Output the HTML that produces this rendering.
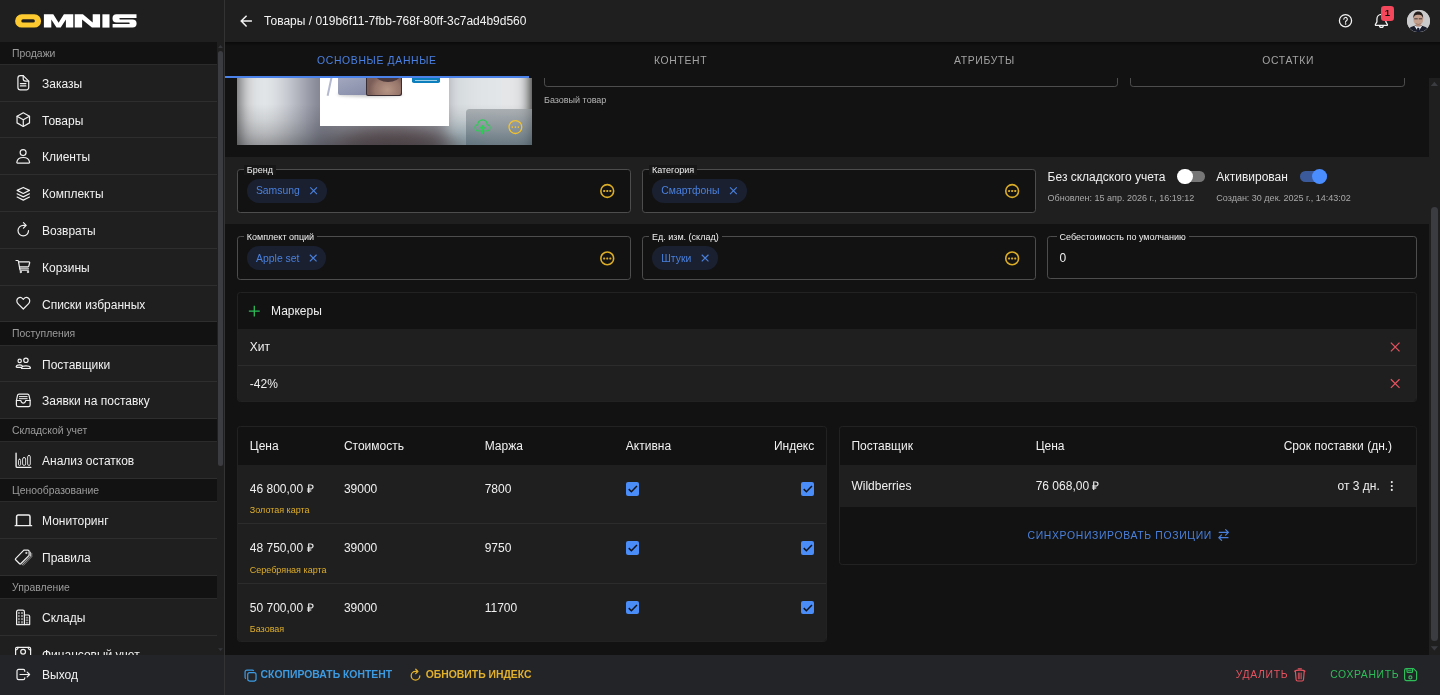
<!DOCTYPE html>
<html lang="ru">
<head>
<meta charset="utf-8">
<title>Omnis</title>
<style>
*{box-sizing:border-box;margin:0;padding:0}
html,body{width:1440px;height:695px;overflow:hidden;background:#121212;}
body{font-family:"Liberation Sans",sans-serif;font-size:12px;color:#ededed;position:relative;-webkit-font-smoothing:antialiased}
#app{position:absolute;left:0;top:0;width:1440px;height:695px;overflow:hidden;will-change:transform;background:#121212}
.abs{position:absolute}
svg{display:block}
.ic{position:absolute;width:20px;height:20px}
.ic svg{width:20px;height:20px;fill:none;stroke:#f0f0f0;stroke-width:1.5;stroke-linecap:round;stroke-linejoin:round}

/* ---------- sidebar ---------- */
#side{left:0;top:0;width:224px;height:695px;background:#1f1f1f;overflow:hidden}
#sideline{left:224px;top:0;width:1px;height:695px;background:#333333}
#logo{left:0;top:0;width:224px;height:41.6px}
#slist{left:0;top:41.6px;width:217px;height:614px;overflow:hidden}
.sh{height:23.2px;background:#121212;border-bottom:1px solid #2b2b2b;color:#9c9c9c;font-size:10.4px;line-height:23.6px;padding-left:12px}
.si{height:36.8px;border-bottom:1px solid #2e2e2e;position:relative;line-height:38.4px;padding-left:42px;font-size:12px;color:#f1f1f1;white-space:nowrap}
.si .ic{left:13px;top:8.5px}
#sscroll{left:217px;top:41.6px;width:7px;height:613px;background:#1f1f1f}
#sthumb{left:218px;top:50.700px;width:5px;height:415.700px;border-radius:2.500px;background:#3b3c41}
#sfoot{left:0;top:654.6px;width:224px;height:41px;background:#232428}
#sfoot .t{left:42px;top:0;line-height:41.400px;font-size:12px;color:#f1f1f1}
#sfoot .ic{left:13px;top:9.400px}

/* ---------- header ---------- */
#head{left:225px;top:0;width:1215px;height:41.8px;background:#1f1f1f}
#title{left:264.1px;top:0;line-height:42.6px;font-size:12px;color:#f3f3f3;white-space:nowrap}
#tabs{left:225px;top:41.8px;width:1215px;height:36.2px;background:#121212}
#tabshadow{left:225px;top:41.8px;width:1215px;height:4px;background:linear-gradient(#0a0a0a,rgba(18,18,18,0))}
.tab{position:absolute;top:41.8px;width:303.75px;height:34.4px;line-height:37px;text-align:center;font-size:10.4px;letter-spacing:.66px;color:#a3a3a3;white-space:nowrap}
.tab.on{color:#4a80e2}
#tabline{left:225px;top:76px;width:303.6px;height:2px;background:#4a82ea}

/* ---------- content ---------- */
.t12{position:absolute;font-size:12px;line-height:14px;white-space:nowrap;color:#f0f0f0}
.t9{position:absolute;font-size:9px;line-height:10px;white-space:nowrap}
.t10{position:absolute;font-size:10.4px;line-height:11px;white-space:nowrap}
#band{left:225px;top:157px;width:1204px;height:67.300px;background:#1f1f1f}
.fld{position:absolute;border:1px solid #4d4d4d;border-radius:3.200px;background:#121212}
.lbl{position:absolute;font-size:9px;line-height:10px;color:#f0f0f0;white-space:nowrap;padding:0 3px}
.chip{position:absolute;height:24px;border-radius:12px;background:#1a2030}
.chip .ct{position:absolute;left:9.300px;top:6.500px;font-size:10.400px;line-height:11px;color:#4a80dc;white-space:nowrap}
.dots{position:absolute;width:19.200px;height:19.200px}
.panel{position:absolute;border:1px solid #222222;border-radius:3.200px;overflow:hidden;background:#121212}
.row{position:absolute;left:0;width:100%;background:#1f1f1f}
.hl{position:absolute;left:0;width:100%;height:1px;background:#2c2c2c}
.cb{position:absolute;width:13.700px;height:13.700px;border-radius:2px;background:#4a8cf8}
.cb svg{width:13.700px;height:13.700px}
#vscroll{left:1429px;top:78px;width:11px;height:577px;background:#1f1f1f}
#vthumb{left:1430.800px;top:207.300px;width:7.200px;height:433.700px;border-radius:3.600px;background:#3b3c41}
#foot{left:225px;top:654.600px;width:1215px;height:41px;background:#232428}
.fb{position:absolute;font-size:10.400px;line-height:11px;white-space:nowrap}
</style>
</head>
<body>
<div id="app">

<!-- ================= SIDEBAR ================= -->
<div id="side" class="abs">
  <div id="logo" class="abs">
    <svg width="224" height="42" viewBox="0 0 224 42">
      <path fill="#fdcb2f" fill-rule="evenodd" d="M21.8 14.2h12.6a6.7 6.7 0 0 1 0 13.4H21.8a6.7 6.7 0 0 1 0-13.4zM23 19.2a1.7 1.7 0 0 0 0 3.4h10.2a1.7 1.7 0 0 0 0-3.4z"/>
      <g fill="#ffffff">
        <path d="M43.9 14.3h9.4l5.3 8.4 5.3-8.4h9.4v13.3h-7.4v-8.2l-5.2 8.2h-4.2l-5.2-8.2v8.2h-7.4z"/>
        <path d="M74.7 14.3h8.2l9.8 8.1v-8.1h7.4v13.3h-8.2l-9.8-8.1v8.1h-7.4z"/>
        <path d="M102.4 14.3h7.1v13.3h-7.1z"/>
        <path d="M116.6 14.3h19.9v3.6h-16.3q-.9 0-.9.75t.9.75h12.3q4.1 0 4.1 4.1t-4.1 4.1h-19.9v-3.6h16.3q.9 0 .9-.75t-.9-.75h-12.3q-4.1 0-4.1-4.1t4.1-4.1z"/>
      </g>
    </svg>
  </div>

  <div id="slist" class="abs">
    <div class="sh">Продажи</div>
    <div class="si"><span class="ic"><svg viewBox="-0.75 0 25 25"><path d="M8.400 3.250h3.600l6.900 6.900v7.850a3 3 0 0 1-3 3h-7.500a3 3 0 0 1-3-3V6.250a3 3 0 0 1 3-3z"/><path d="M12 3.250v4a2.900 2.900 0 0 0 2.900 2.900h4"/><path d="M8.500 13.250h6.900M8.500 16.100h6.900"/></svg></span>Заказы</div>
    <div class="si"><span class="ic"><svg viewBox="-0.75 0 25 25"><path d="M12.100 3.500l7.800 4.400v8.200l-7.800 4.400-7.800-4.400V7.900z"/><path d="M4.300 7.900l7.800 4.300 7.800-4.300M12.100 12.200v8.300"/></svg></span>Товары</div>
    <div class="si"><span class="ic"><svg viewBox="-0.75 0 25 25"><circle cx="11.900" cy="7" r="3.700"/><path d="M4.900 20.250a.9.900 0 0 1-.9-1c.5-3.750 3.800-6.150 8-6.150s7.500 2.400 8 6.150a.9.900 0 0 1-.9 1z"/></svg></span>Клиенты</div>
    <div class="si"><span class="ic"><svg viewBox="-0.75 0 25 25"><path d="M12.100 4.300l7.700 3.700-7.700 3.900-7.700-3.900z"/><path d="M4.400 12.200l7.700 3.900 7.700-3.900M4.400 16.300l7.700 3.900 7.700-3.900"/></svg></span>Комплекты</div>
    <div class="si"><span class="ic"><svg viewBox="-0.75 0 25 25"><path d="M18.700 13.250a6.600 6.600 0 1 1-6.600-6.600h3"/><path d="M12.300 3.300l3.400 3.400-3.400 3.400"/></svg></span>Возвраты</div>
    <div class="si"><span class="ic"><svg viewBox="-0.75 0 25 25"><path d="M3 4.400h2a1 1 0 0 1 1 .8l2 11.200h10.600"/><path d="M6.300 6.100h12.900a.9.900 0 0 1 .9 1.100l-1.100 4.300a1 1 0 0 1-1 .8H7.400"/><path d="M7.700 14.300h10.800" stroke-opacity=".7"/><circle cx="8.900" cy="18.700" r=".9" fill="#f0f0f0" stroke-width="1"/><circle cx="17.900" cy="18.700" r=".9" fill="#f0f0f0" stroke-width="1"/></svg></span>Корзины</div>
    <div class="si"><span class="ic"><svg viewBox="-0.75 0 25 25"><path d="M12.100 18.800L5.400 12C3.500 10 3.600 7 5.500 5.400c1.900-1.600 4.500-1.200 6.100.6l.5.600.5-.6c1.600-1.800 4.200-2.200 6.100-.6 1.900 1.600 2 4.600.1 6.600z"/></svg></span>Списки избранных</div>
    <div class="sh">Поступления</div>
    <div class="si"><span class="ic"><svg viewBox="-0.75 0 25 25"><circle cx="7.600" cy="8.600" r="2.100"/><circle cx="15.400" cy="7.900" r="2.750"/><path d="M10.600 18.100a.85.850 0 0 1-.85-1c.55-1.600 2.750-2.350 5.650-2.350s5.100.75 5.650 2.350a.85.850 0 0 1-.85 1z"/><path d="M9.300 16.750H4.100a.85.850 0 0 1-.85-1c.45-1.450 2.150-2.150 4.350-2.150 1.200 0 2.200.2 3 .7"/></svg></span>Поставщики</div>
    <div class="si"><span class="ic"><svg viewBox="-0.75 0 25 25"><path d="M6.900 4h10.400a2 2 0 0 1 2 1.600l1.400 6.300v5.700a2 2 0 0 1-2 2H5.500a2 2 0 0 1-2-2v-5.700l1.400-6.300a2 2 0 0 1 2-1.600z"/><path d="M3.500 11.900h5.600c.3 2 1.400 3.300 3 3.300s2.700-1.300 3-3.300h5.650"/><path d="M7.200 7h9.800M7.200 9.600h9.800" stroke-width="1.250"/></svg></span>Заявки на поставку</div>
    <div class="sh">Складской учет</div>
    <div class="si"><span class="ic"><svg viewBox="-0.75 0 25 25"><path d="M3.100 2.800v16.200a1.500 1.500 0 0 0 1.500 1.500h16.900" stroke-width="1.700"/><rect x="6.100" y="10.300" width="2.650" height="7.700" rx="1.300" stroke-width="1.100"/><rect x="11.250" y="8.200" width="3.800" height="9.800" rx="1.800" stroke-width="1.100"/><rect x="17.550" y="5.600" width="3.350" height="12.400" rx="1.600" stroke-width="1.100"/></svg></span>Анализ остатков</div>
    <div class="sh">Ценообразование</div>
    <div class="si"><span class="ic"><svg viewBox="-0.75 0 25 25"><path d="M3.750 17.700V7.100a2 2 0 0 1 2-2h12.750a2 2 0 0 1 2 2v10.600" stroke-width="1.900"/><path d="M1.900 18.400h20.700" stroke-width="1.500"/></svg></span>Мониторинг</div>
    <div class="si"><span class="ic"><svg viewBox="-0.75 0 25 25"><path d="M12.800 2.600h5a1.600 1.600 0 0 1 1.600 1.600v5L8.900 19.700a1 1 0 0 1-1.400 0l-5-5a1 1 0 0 1 0-1.400z"/><circle cx="15.850" cy="6.150" r=".9" fill="#f0f0f0" stroke-width=".6"/><path d="M21.100 5.200v5L10.700 20.800" stroke-width="1.150" stroke-opacity=".85"/><path d="M22.700 6.600v4.300L12.300 21.600" stroke-width="1.050" stroke-opacity=".6"/></svg></span>Правила</div>
    <div class="sh">Управление</div>
    <div class="si"><span class="ic"><svg viewBox="-0.75 0 25 25"><path d="M3.750 20.750V4.750a2 2 0 0 1 2-2h5.750a2 2 0 0 1 2 2v16z"/><path d="M13.500 8.750h4.600a2 2 0 0 1 2 2v10h-6.600"/><g stroke="none" fill="#8c8c8c"><rect x="5.500" y="5" width="2.300" height="2.600"/><rect x="9.200" y="5" width="2.600" height="2.600"/><rect x="5.500" y="8.800" width="2.300" height="2.600"/><rect x="9.200" y="8.800" width="2.600" height="2.600"/><rect x="5.500" y="12.600" width="2.300" height="2.600"/><rect x="9.200" y="12.600" width="2.600" height="2.600"/><rect x="5.500" y="16.400" width="2.300" height="3"/><rect x="9.200" y="16.400" width="2.600" height="3"/><rect x="15.200" y="11" width="3.200" height="2.200"/><rect x="15.200" y="14.200" width="3.200" height="2.200"/><rect x="15.200" y="17.400" width="3.200" height="2.200"/></g></svg></span>Склады</div>
    <div class="si"><span class="ic"><svg viewBox="-0.75 0 25 25"><rect x="2.500" y="4.250" width="18.750" height="11" rx="1.500"/><circle cx="11.900" cy="9.600" r="3"/><path d="M2.500 7.400a3 3 0 0 0 3-3.100M21.250 7.400a3 3 0 0 1-3-3.100"/></svg></span>Финансовый учет</div>
  </div>
  <div id="sscroll" class="abs"></div>
  <div id="sthumb" class="abs"></div>
  <svg class="abs" style="left:218px;top:45px;width:5px;height:3px" width="5" height="3" viewBox="-0.1 -0.1 5 3"><path d="M0 2.900L2.400 0 4.800 2.900z" fill="#36373b"/></svg>
  <svg class="abs" style="left:218px;top:648px;width:5px;height:4px" width="5" height="4" viewBox="-0.1 -0.2 5 4"><path d="M0 0L2.400 2.900 4.800 0z" fill="#36373b"/></svg>
  <div id="sfoot" class="abs">
    <span class="ic"><svg viewBox="-0.75 -1 25 25"><path d="M14 8.100v-.400a2 2 0 0 0-2-2H6.250a2 2 0 0 0-2 2v8.900a2 2 0 0 0 2 2H12a2 2 0 0 0 2-2v-.400"/><path d="M8 12.150h11.800M17 9.200l3 2.950-3 2.950"/></svg></span>
    <span class="t abs">Выход</span>
  </div>
</div>
<div id="sideline" class="abs"></div>

<!-- ================= CONTENT ================= -->
<!-- product image -->
<div class="abs" id="pimg" style="left:236.800px;top:78px;width:295.700px;height:66.600px;overflow:hidden;background:#8c8c90">
  <div class="abs" style="left:-20px;top:-30px;width:336px;height:127px;filter:blur(5px);background:
    radial-gradient(ellipse 72px 24px at 176px 97px,#66595c 0%,#6d6165 50%,rgba(109,97,101,0) 100%),
    radial-gradient(ellipse 30px 30px at 246px 96px,#b4d0da 0%,rgba(180,208,218,0) 100%),
    linear-gradient(90deg,#6e6e70 0px,#6e6e70 19px,#b2b3b5 25px,#d9dcde 33px,#e5e8ea 48px,#d7dade 61px,#bcbfc7 76px,#9b9eaa 91px,#80828f 104px,#8c8c96 125px,#9a9aa2 225px,#d4d9dc 236px,#dfe3e5 260px,#e5e7e9 292px,#dddfe0 306px,#a0a0a0 312px,#2c2c2c 317px,#202020 336px)"></div>
  <div class="abs" style="left:0;top:26px;width:296px;height:41px;background:linear-gradient(rgba(28,28,32,0) 0%,rgba(28,28,32,.1) 40%,rgba(28,28,32,.22) 70%,rgba(26,26,30,.38) 100%)"></div>
  <div class="abs" style="left:82.900px;top:0;width:129.400px;height:48px;background:#fff"></div>
  <!-- tablet -->
  <div class="abs" style="left:100.500px;top:14px;width:66px;height:5px;border-radius:50%;background:rgba(60,60,70,.28);filter:blur(1.500px)"></div>
  <div class="abs" style="left:101.600px;top:0;width:29px;height:17.200px;background:linear-gradient(160deg,#a3a8bf,#868ca8);border-radius:0 0 0 2px"></div>
  <div class="abs" style="left:129.400px;top:0;width:36.200px;height:17.800px;background:#3a2d31;border-radius:0 0 2.500px 2px"></div>
  <div class="abs" style="left:130.200px;top:0;width:34.400px;height:16.700px;background:radial-gradient(ellipse 18px 16px at 60% 70%,#b79585,#97766b 70%,#7b5e58);border-radius:0 0 2px 1.500px"></div>
  <div class="abs" style="left:139px;top:-9px;width:24px;height:13px;border-radius:50%;background:#4c3a3d"></div>
  <div class="abs" style="left:93.800px;top:-3px;width:1.500px;height:21px;background:#b4b9d0;transform:rotate(12deg);transform-origin:0 0"></div>
  <div class="abs" style="left:175.200px;top:0;width:28px;height:4.900px;background:#0d7fbd;border-radius:0 0 1.800px 1.800px"></div>
  <div class="abs" style="left:178px;top:1.700px;width:22.500px;height:1.400px;background:rgba(255,255,255,.62)"></div>
  <!-- overlay -->
  <div class="abs" style="left:229.600px;top:31.100px;width:67px;height:36px;background:linear-gradient(rgba(150,156,160,.72),rgba(88,108,120,.72));border-top-left-radius:3.500px"></div>
  <svg class="abs" style="left:235.2px;top:39px;width:21px;height:20px" width="21" height="20" viewBox="-1.125 -0.5 26.25 25" fill="none" stroke="#2fcd57" stroke-width="1.600" stroke-linecap="round" stroke-linejoin="round"><path d="M9 16.900H6.600a3.900 3.900 0 0 1-.6-7.750 6 6 0 0 1 12 0 3.900 3.900 0 0 1-.6 7.750H15"/><path d="M12 20.200v-9.400M9.100 13.400L12 10.500l2.900 2.900"/></svg>
  <svg class="abs" style="left:268.2px;top:39px;width:20px;height:20px" width="20" height="20" viewBox="-1 -0.625 25 25"><circle cx="12" cy="12" r="8" fill="none" stroke="#f2c230" stroke-width="1.600"/><circle cx="8.250" cy="12" r="1.100" fill="#f2c230"/><circle cx="12" cy="12" r="1.100" fill="#f2c230"/><circle cx="15.750" cy="12" r="1.100" fill="#f2c230"/></svg>
</div>

<!-- top (scrolled) fields -->
<div class="abs" style="left:544px;top:70px;width:574.400px;height:16.600px;border:1px solid #4d4d4d;border-radius:3.200px"></div>
<div class="abs" style="left:1129.800px;top:70px;width:275.400px;height:16.600px;border:1px solid #4d4d4d;border-radius:3.200px"></div>
<div class="t9" style="left:544px;top:95.300px;color:#b4b4b4">Базовый товар</div>

<div id="band" class="abs"></div>

<!-- row 1 -->
<div class="fld" style="left:236.800px;top:168.800px;width:394px;height:43.800px"></div>
<div class="lbl" style="left:243.800px;top:164.600px;background:#171717">Бренд</div>
<div class="chip" style="left:246.600px;top:178.800px;width:80.300px"><span class="ct">Samsung</span><svg class="abs" style="left:62.4px;top:8.2px;width:9px;height:8px" width="9" height="8" viewBox="-1.053 0 11.842 10.526"><path d="M.6.600l8.800 8.800M9.400.600L.6 9.400" stroke="#4a80dc" stroke-width="1.500" fill="none"/></svg></div>
<svg height="20" width="20" class="dots" style="left:597px;top:181px;width:20px;height:20px" viewBox="-0.812 -0.5 25 25"><circle cx="12" cy="12" r="8" fill="none" stroke="#dbad27" stroke-width="2"/><rect x="6.900" y="10.800" width="2.500" height="2.500" rx=".6" fill="#dbad27"/><rect x="10.750" y="10.800" width="2.500" height="2.500" rx=".6" fill="#dbad27"/><rect x="14.600" y="10.800" width="2.500" height="2.500" rx=".6" fill="#dbad27"/></svg>

<div class="fld" style="left:642.100px;top:168.800px;width:393.700px;height:43.800px"></div>
<div class="lbl" style="left:649px;top:164.600px;background:#171717">Категория</div>
<div class="chip" style="left:652px;top:178.700px;width:94.900px"><span class="ct">Смартфоны</span><svg class="abs" style="left:77px;top:7.3px;width:9px;height:9px" width="9" height="9" viewBox="-0.789 -1.184 11.842 11.842"><path d="M.6.600l8.800 8.800M9.400.600L.6 9.400" stroke="#4a80dc" stroke-width="1.500" fill="none"/></svg></div>
<svg height="20" width="20" class="dots" style="left:1002px;top:181px;width:20px;height:20px" viewBox="-0.687 -0.5 25 25"><circle cx="12" cy="12" r="8" fill="none" stroke="#dbad27" stroke-width="2"/><rect x="6.900" y="10.800" width="2.500" height="2.500" rx=".6" fill="#dbad27"/><rect x="10.750" y="10.800" width="2.500" height="2.500" rx=".6" fill="#dbad27"/><rect x="14.600" y="10.800" width="2.500" height="2.500" rx=".6" fill="#dbad27"/></svg>

<!-- switches -->
<div class="t12" style="left:1047.600px;top:170px">Без складского учета</div>
<div class="abs" style="left:1177.500px;top:171.300px;width:27.200px;height:10.600px;border-radius:5.300px;background:#767676"></div>
<div class="abs" style="left:1177px;top:168.700px;width:15.600px;height:15.600px;border-radius:50%;background:#ffffff"></div>
<div class="t12" style="left:1216.300px;top:170px">Активирован</div>
<div class="abs" style="left:1300px;top:171.300px;width:27.200px;height:10.600px;border-radius:5.300px;background:#3a5a9c"></div>
<div class="abs" style="left:1311.800px;top:168.700px;width:15.600px;height:15.600px;border-radius:50%;background:#4a8dff"></div>
<div class="t9" style="left:1047.600px;top:192.800px;color:#a9a9a9">Обновлен: 15 апр. 2026 г., 16:19:12</div>
<div class="t9" style="left:1216.300px;top:192.800px;color:#a9a9a9">Создан: 30 дек. 2025 г., 14:43:02</div>

<!-- row 2 -->
<div class="fld" style="left:236.800px;top:236.400px;width:394px;height:43.600px"></div>
<div class="lbl" style="left:243.800px;top:232.200px;background:#121212">Комплект опций</div>
<div class="chip" style="left:246.800px;top:246.100px;width:79.700px"><span class="ct">Apple set</span><svg class="abs" style="left:62.2px;top:7.9px;width:8px;height:8px" width="8" height="8" viewBox="-0.526 -0.395 10.526 10.526"><path d="M.6.600l8.800 8.800M9.400.600L.6 9.400" stroke="#4a80dc" stroke-width="1.500" fill="none"/></svg></div>
<svg height="20" width="20" class="dots" style="left:597px;top:248px;width:20px;height:20px" viewBox="-0.812 -1 25 25"><circle cx="12" cy="12" r="8" fill="none" stroke="#dbad27" stroke-width="2"/><rect x="6.900" y="10.800" width="2.500" height="2.500" rx=".6" fill="#dbad27"/><rect x="10.750" y="10.800" width="2.500" height="2.500" rx=".6" fill="#dbad27"/><rect x="14.600" y="10.800" width="2.500" height="2.500" rx=".6" fill="#dbad27"/></svg>

<div class="fld" style="left:642.100px;top:236.400px;width:393.700px;height:43.600px"></div>
<div class="lbl" style="left:649px;top:232.200px;background:#121212">Ед. изм. (склад)</div>
<div class="chip" style="left:652px;top:246.100px;width:66.400px"><span class="ct">Штуки</span><svg class="abs" style="left:49px;top:7.9px;width:8px;height:8px" width="8" height="8" viewBox="-0.395 -0.395 10.526 10.526"><path d="M.6.600l8.800 8.800M9.400.600L.6 9.400" stroke="#4a80dc" stroke-width="1.500" fill="none"/></svg></div>
<svg height="20" width="20" class="dots" style="left:1002px;top:248px;width:20px;height:20px" viewBox="-0.687 -1 25 25"><circle cx="12" cy="12" r="8" fill="none" stroke="#dbad27" stroke-width="2"/><rect x="6.900" y="10.800" width="2.500" height="2.500" rx=".6" fill="#dbad27"/><rect x="10.750" y="10.800" width="2.500" height="2.500" rx=".6" fill="#dbad27"/><rect x="14.600" y="10.800" width="2.500" height="2.500" rx=".6" fill="#dbad27"/></svg>

<div class="fld" style="left:1047.200px;top:236.300px;width:370px;height:42.300px"></div>
<div class="lbl" style="left:1056.500px;top:232.200px;background:#121212">Себестоимость по умолчанию</div>
<div class="t12" style="left:1059.500px;top:250.800px">0</div>

<!-- markers panel -->
<div class="panel" style="left:236.700px;top:291.700px;width:1180.500px;height:110.800px">
  <div class="row" style="top:36px;height:36px"></div>
  <div class="hl" style="top:72px"></div>
  <div class="row" style="top:73px;height:37px"></div>
</div>
<svg class="abs" style="left:244px;top:301px;width:20px;height:20px" width="20" height="20" viewBox="-0.875 -0.625 25 25"><path d="M12 5.200v13.600M5.200 12h13.600" stroke="#2ebd59" stroke-width="1.600" fill="none"/></svg>
<div class="t12" style="left:271px;top:304.300px">Маркеры</div>
<div class="t12" style="left:249.800px;top:340.300px">Хит</div>
<div class="t12" style="left:249.800px;top:377px">-42%</div>
<svg class="abs" style="left:1390px;top:342px;width:10px;height:10px" width="10" height="10" viewBox="-0.417 -0.208 10.417 10.417"><path d="M.5.500l9 9M9.500.500l-9 9" stroke="#e5535f" stroke-width="1.300" fill="none"/></svg>
<svg class="abs" style="left:1390px;top:378px;width:10px;height:11px" width="10" height="11" viewBox="-0.417 -0.833 10.417 11.458"><path d="M.5.500l9 9M9.500.500l-9 9" stroke="#e5535f" stroke-width="1.300" fill="none"/></svg>

<!-- price table -->
<div class="panel" style="left:236.700px;top:426.100px;width:590.100px;height:216.200px">
  <div class="row" style="top:37.500px;height:59px"></div>
  <div class="hl" style="top:96px"></div>
  <div class="row" style="top:97px;height:59px"></div>
  <div class="hl" style="top:155.500px"></div>
  <div class="row" style="top:156.500px;height:60px"></div>
</div>
<div class="t12" style="left:249.800px;top:439px">Цена</div>
<div class="t12" style="left:343.900px;top:439px">Стоимость</div>
<div class="t12" style="left:484.700px;top:439px">Маржа</div>
<div class="t12" style="left:625.800px;top:439px">Активна</div>
<div class="t12" style="left:773.900px;top:439px">Индекс</div>

<div class="t12" style="left:249.800px;top:482px">46 800,00 ₽</div>
<div class="t9" style="left:249.800px;top:505.400px;color:#deae2c">Золотая карта</div>
<div class="t12" style="left:343.900px;top:482px">39000</div>
<div class="t12" style="left:484.700px;top:482px">7800</div>
<div class="cb" style="left:625.800px;top:482px"><svg viewBox="0 0 14 14"><path d="M2.800 7.300l2.700 2.700 5.700-5.900" stroke="#10131a" stroke-width="1.500" fill="none"/></svg></div>
<div class="cb" style="left:800.500px;top:482px"><svg viewBox="0 0 14 14"><path d="M2.800 7.300l2.700 2.700 5.700-5.900" stroke="#10131a" stroke-width="1.500" fill="none"/></svg></div>

<div class="t12" style="left:249.800px;top:541.300px">48 750,00 ₽</div>
<div class="t9" style="left:249.800px;top:564.700px;color:#deae2c">Серебряная карта</div>
<div class="t12" style="left:343.900px;top:541.300px">39000</div>
<div class="t12" style="left:484.700px;top:541.300px">9750</div>
<div class="cb" style="left:625.800px;top:541.300px"><svg viewBox="0 0 14 14"><path d="M2.800 7.300l2.700 2.700 5.700-5.900" stroke="#10131a" stroke-width="1.500" fill="none"/></svg></div>
<div class="cb" style="left:800.500px;top:541.300px"><svg viewBox="0 0 14 14"><path d="M2.800 7.300l2.700 2.700 5.700-5.900" stroke="#10131a" stroke-width="1.500" fill="none"/></svg></div>

<div class="t12" style="left:249.800px;top:600.600px">50 700,00 ₽</div>
<div class="t9" style="left:249.800px;top:624px;color:#deae2c">Базовая</div>
<div class="t12" style="left:343.900px;top:600.600px">39000</div>
<div class="t12" style="left:484.700px;top:600.600px">11700</div>
<div class="cb" style="left:625.800px;top:600.600px"><svg viewBox="0 0 14 14"><path d="M2.800 7.300l2.700 2.700 5.700-5.900" stroke="#10131a" stroke-width="1.500" fill="none"/></svg></div>
<div class="cb" style="left:800.500px;top:600.600px"><svg viewBox="0 0 14 14"><path d="M2.800 7.300l2.700 2.700 5.700-5.900" stroke="#10131a" stroke-width="1.500" fill="none"/></svg></div>

<!-- supplier table -->
<div class="panel" style="left:838.700px;top:426.100px;width:578.400px;height:138.600px">
  <div class="row" style="top:37.500px;height:42.200px"></div>
</div>
<div class="t12" style="left:851.400px;top:439px">Поставщик</div>
<div class="t12" style="left:1035.700px;top:439px">Цена</div>
<div class="t12" style="left:1283.700px;top:439px">Срок поставки (дн.)</div>
<div class="t12" style="left:851.400px;top:479.100px">Wildberries</div>
<div class="t12" style="left:1035.700px;top:479.100px">76 068,00 ₽</div>
<div class="t12" style="left:1337.500px;top:479.100px">от 3 дн.</div>
<svg class="abs" style="left:1390px;top:480px;width:4px;height:12px" width="4" height="12" viewBox="-0.3 -0.8 4 12"><circle cx="1.500" cy="1.300" r="1.050" fill="#f0f0f0"/><circle cx="1.500" cy="5.200" r="1.050" fill="#f0f0f0"/><circle cx="1.500" cy="9.100" r="1.050" fill="#f0f0f0"/></svg>
<div class="fb" style="left:1027.500px;top:529.600px;color:#4a80dc;letter-spacing:.670px">СИНХРОНИЗИРОВАТЬ ПОЗИЦИИ</div>
<svg class="abs" style="left:1214px;top:525px;width:20px;height:20px" width="20" height="20" viewBox="0 -0.5 25 25" fill="none" stroke="#4a80dc" stroke-width="1.500" stroke-linecap="round" stroke-linejoin="round"><path d="M6.500 8.700h11.500M14.500 5.200L18 8.700l-3.500 3.500M17.500 15.300H6M9.500 11.800L6 15.300l3.500 3.500"/></svg>

<!-- scrollbar -->
<div id="vscroll" class="abs"></div>
<div id="vthumb" class="abs"></div>
<svg class="abs" style="left:1430px;top:81px;width:8px;height:6px" width="8" height="6" viewBox="-0.8 -0.8 8 6"><path d="M0 4.300L3.600 0 7.200 4.300z" fill="#3b3c41"/></svg>
<svg class="abs" style="left:1430px;top:646px;width:8px;height:5px" width="8" height="5" viewBox="-0.8 -0.2 8 5"><path d="M0 0L3.600 4.300 7.200 0z" fill="#3b3c41"/></svg>

<!-- footer -->
<div id="foot" class="abs"></div>
<svg class="abs" style="left:241px;top:666px;width:20px;height:20px" width="20" height="20" viewBox="0 0 25 25" fill="none" stroke="#3d9be2" stroke-width="1.500" stroke-linejoin="round"><rect x="8.400" y="8.400" width="10.400" height="10.400" rx="2.400"/><path d="M6 16a2.400 2.400 0 0 1-.9-1.900V7.500a2.400 2.400 0 0 1 2.400-2.400h6.600a2.400 2.400 0 0 1 1.900.9"/></svg>
<div class="fb" style="left:260.600px;top:669.400px;color:#3d9be2;font-weight:700">СКОПИРОВАТЬ КОНТЕНТ</div>
<svg class="abs" style="left:405px;top:665px;width:21px;height:20px" width="21" height="20" viewBox="-1.125 -0.375 26.25 25" fill="none" stroke="#e2b12c" stroke-width="1.600" stroke-linecap="round" stroke-linejoin="round"><path d="M17.400 13.100a5.400 5.400 0 1 1-5.400-5.400h2.200"/><path d="M12.300 5l2.700 2.700-2.700 2.700"/></svg>
<div class="fb" style="left:425.700px;top:669.400px;color:#e2b12c;font-weight:700">ОБНОВИТЬ ИНДЕКС</div>
<div class="fb" style="left:1235.800px;top:669.400px;color:#e5535f;letter-spacing:.650px">УДАЛИТЬ</div>
<svg class="abs" style="left:1290px;top:665px;width:20px;height:20px" width="20" height="20" viewBox="-0.25 -0.375 25 25" fill="none" stroke="#e5535f" stroke-width="1.500" stroke-linecap="round" stroke-linejoin="round"><path d="M10 4.300h4M5.600 7.400c1.500-1.800 11.300-1.800 12.800 0M6.500 7.700l.9 10.300a1.800 1.800 0 0 0 1.800 1.600h5.600a1.800 1.800 0 0 0 1.800-1.600l.9-10.300"/><path d="M10.200 9.600v7.400M12 9.600v7.400M13.800 9.600v7.400" stroke-width="1.100"/></svg>
<div class="fb" style="left:1330.200px;top:669.400px;color:#2ebd59;letter-spacing:.650px">СОХРАНИТЬ</div>
<svg class="abs" style="left:1401px;top:665px;width:20px;height:20px" width="20" height="20" viewBox="0 0 25 25" fill="none" stroke="#2ebd59" stroke-width="1.500" stroke-linecap="round" stroke-linejoin="round"><path d="M6.700 4.500h9l3.800 3.800v9a2.200 2.200 0 0 1-2.200 2.200H6.700a2.200 2.200 0 0 1-2.200-2.200V6.700a2.200 2.200 0 0 1 2.200-2.200z"/><path d="M7.500 4.500v3.500a1.200 1.200 0 0 0 1.200 1.200h4.600a1.200 1.200 0 0 0 1.200-1.200v-3.500"/><path d="M9.200 6.700h3.600" stroke-width="1.100"/><circle cx="11.750" cy="15.500" r="1.900"/></svg>

<!-- header right icons -->

<!-- ================= HEADER ================= -->
<div id="head" class="abs"></div>
<svg class="abs" style="left:237px;top:12px;width:18px;height:18px" width="18" height="18" viewBox="-0.135 -0.27 24.27 24.27"><path fill="#f3f3f3" d="M20,11V13H8L13.500,18.500L12.080,19.920L4.160,12L12.080,4.080L13.500,5.500L8,11H20Z"/></svg>
<div id="title" class="abs">Товары / 019b6f11-7fbb-768f-80ff-3c7ad4b9d560</div>


<!-- header right icons -->
<svg class="abs" style="left:1335px;top:11px;width:21px;height:20px" width="21" height="20" viewBox="-1.125 -0.125 26.25 25" fill="none" stroke="#f3f3f3" stroke-width="1.600" stroke-linecap="round" stroke-linejoin="round"><circle cx="12" cy="12" r="7.600"/><path d="M9.900 10.100a2.200 2.200 0 1 1 3.300 1.900c-.8.500-1.200.9-1.200 1.800" stroke-width="1.400"/><circle cx="12" cy="16.100" r=".55" fill="#f3f3f3" stroke-width=".7"/></svg>
<svg class="abs" style="left:1371px;top:11px;width:20px;height:20px" width="20" height="20" viewBox="-1 -0.5 25 25" fill="none" stroke="#f3f3f3" stroke-width="1.600" stroke-linecap="round" stroke-linejoin="round"><path d="M12 3.800a5.600 5.600 0 0 0-5.600 5.600v3.700l-1.900 3.300a.7.700 0 0 0 .6 1h13.800a.7.700 0 0 0 .6-1l-1.900-3.300V9.400A5.600 5.600 0 0 0 12 3.800z"/><path d="M9.600 17.700a2.400 2.400 0 0 0 4.800 0"/></svg>
<div class="abs" style="left:1381.300px;top:6px;width:12.300px;height:15px;border-radius:3.200px;background:#f4475c"></div>
<div class="abs" style="left:1381.300px;top:8px;width:12.300px;text-align:center;font-size:9.600px;line-height:10px;font-weight:700;color:#0d0d0d">1</div>
<div class="abs" style="left:1406.800px;top:9.500px;width:22.900px;height:22.900px;border-radius:50%;overflow:hidden;background:#c9c9cb">
  <svg width="22.900" height="22.900" viewBox="0 0 57 57">
    <rect width="57" height="57" fill="#cbcbcd"/>
    <rect x="22" y="32" width="12" height="10" fill="#b58a76"/>
    <path d="M1 57c0-11 8-15.500 20-18.500l7 4.500 7-4.500C47 41.500 56 46 56 57z" fill="#1a1e2c"/>
    <path d="M18 39.500l10 14.500 10-14.500-10 2.500z" fill="#eef0f4"/>
    <path d="M25.600 44h4.800l1.600 13h-8z" fill="#141a30"/>
    <ellipse cx="28" cy="23.500" rx="12.200" ry="14.400" fill="#c5a08f"/>
    <path d="M16 21.500C14.500 10 20 3.500 28 3.500S41.500 10 40 21.500c-1-5.500-3.500-9.500-12-9.500s-11 4-12 9.500z" fill="#251d1b"/>
    <path d="M18 22h8.700M29.300 22H38" stroke="#2a2626" stroke-width="2.200" fill="none"/>
    <path d="M20.500 32c2.500 3.500 12.500 3.500 15 0-2.500 6.500-12.500 6.500-15 0z" fill="#8a6a5d"/>
  </svg>
</div>

<div id="tabs" class="abs"></div>
<div id="tabshadow" class="abs"></div>
<div class="tab on" style="left:225px">ОСНОВНЫЕ ДАННЫЕ</div>
<div class="tab" style="left:528.750px">КОНТЕНТ</div>
<div class="tab" style="left:832.500px">АТРИБУТЫ</div>
<div class="tab" style="left:1136.250px">ОСТАТКИ</div>
<div id="tabline" class="abs"></div>


</div>
</body>
</html>
